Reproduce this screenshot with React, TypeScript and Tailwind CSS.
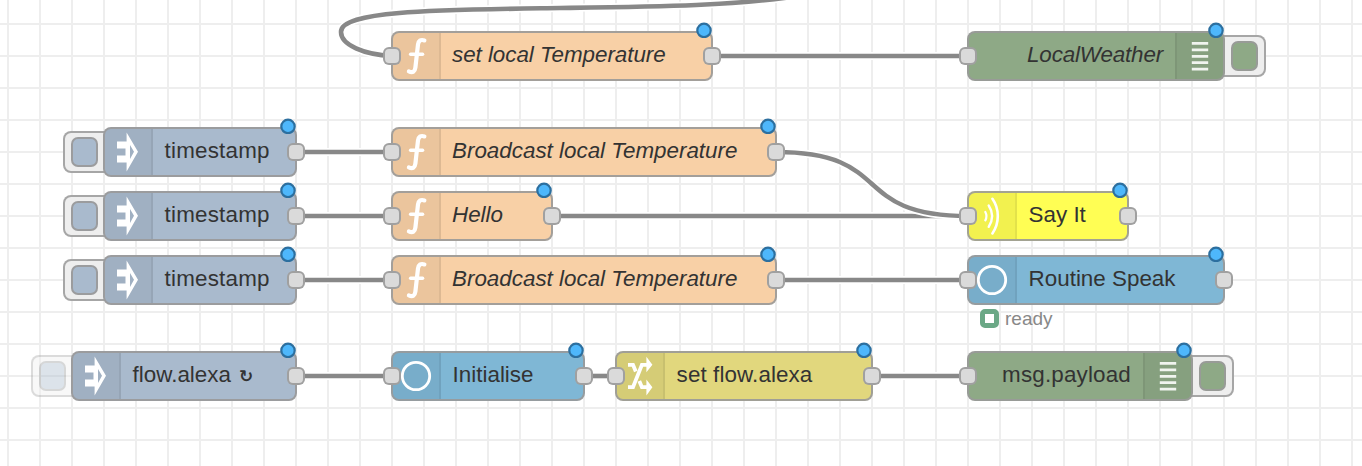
import type { ReactNode } from "react";

type IconName = "inject" | "function" | "debug" | "say" | "circle" | "change";

type FlowNode = {
  id: string;
  x: number;
  y: number;
  w: number;
  fill: string;
  icon: IconName;
  label: string;
  tracking?: string;
  repeats?: boolean;
  input?: boolean;
  output?: boolean;
  button?: "left" | "right" | "disabled";
  italic?: boolean;
};

const PEACH = "bg-[#f8d0a6]";
const STEEL = "bg-[#a9bacd]";
const BLUE = "bg-[#7fb7d5]";
const GREEN = "bg-[#8ea986]";

const nodes: FlowNode[] = [
  { id: "n1", x: 392, y: 32, w: 320, fill: PEACH, icon: "function", label: "set local Temperature", tracking: "tracking-[-0.04px]", input: true, output: true, italic: true },
  { id: "n2", x: 968, y: 32, w: 256, fill: GREEN, icon: "debug", label: "LocalWeather", tracking: "tracking-[-0.15px]", input: true, button: "right", italic: true },
  { id: "n3", x: 104, y: 128, w: 192, fill: STEEL, icon: "inject", label: "timestamp", tracking: "tracking-[0.2px]", output: true, button: "left" },
  { id: "n4", x: 392, y: 128, w: 384, fill: PEACH, icon: "function", label: "Broadcast local Temperature", input: true, output: true, italic: true },
  { id: "n5", x: 104, y: 192, w: 192, fill: STEEL, icon: "inject", label: "timestamp", tracking: "tracking-[0.2px]", output: true, button: "left" },
  { id: "n6", x: 392, y: 192, w: 160, fill: PEACH, icon: "function", label: "Hello", input: true, output: true, italic: true },
  { id: "n7", x: 968, y: 192, w: 160, fill: "bg-[#fffe54]", icon: "say", label: "Say It", input: true, output: true },
  { id: "n8", x: 104, y: 256, w: 192, fill: STEEL, icon: "inject", label: "timestamp", tracking: "tracking-[0.2px]", output: true, button: "left" },
  { id: "n9", x: 392, y: 256, w: 384, fill: PEACH, icon: "function", label: "Broadcast local Temperature", input: true, output: true, italic: true },
  { id: "n10", x: 968, y: 256, w: 256, fill: BLUE, icon: "circle", label: "Routine Speak", input: true, output: true },
  { id: "n11", x: 72, y: 352, w: 224, fill: STEEL, icon: "inject", label: "flow.alexa", repeats: true, output: true, button: "disabled" },
  { id: "n12", x: 392, y: 352, w: 192, fill: BLUE, icon: "circle", label: "Initialise", input: true, output: true },
  { id: "n13", x: 616, y: 352, w: 256, fill: "bg-[#e1d77d]", icon: "change", label: "set flow.alexa", tracking: "tracking-[0.1px]", input: true, output: true },
  { id: "n14", x: 968, y: 352, w: 224, fill: GREEN, icon: "debug", label: "msg.payload", tracking: "tracking-[0.18px]", input: true, button: "right" },
];

const wires = [
  "M804 -5 C740 6 650 6.8 560 8 C440 9.8 341 10 341 32 C341 45 364 54.5 392 56",
  "M712 56H968",
  "M296 152H392",
  "M296 216H392",
  "M296 280H392",
  "M552 216H968",
  "M776 152C896 152 848 216 968 216",
  "M776 280H968",
  "M296 376H392",
  "M584 376H616",
  "M872 376H968",
];

const glyphs: Record<IconName, ReactNode> = {
  inject: (
    <path
      fill="white"
      fillRule="evenodd"
      d="M13 13.6H22.6V4.5L34 23.8L22.6 43.5V34.4H13V27.4H21.5V20.6H13ZM26 17V31L30 23.8Z"
    />
  ),
  function: (
    <g fill="none" stroke="white" strokeWidth="4.2" strokeLinecap="round" strokeLinejoin="round">
      <path d="M32.4 8.4C28.6 7.2 26.6 8.8 26 12.5L23.4 35.5C22.9 39.6 20.6 41.2 16.9 39.4" />
      <path d="M18.6 22.2H30.6" strokeWidth="3.4" />
    </g>
  ),
  debug: (
    <path stroke="white" strokeOpacity="0.88" strokeWidth="2.8" d="M15.8 11.4H32.2M15.8 17.8H32.2M15.8 24.3H32.2M15.8 30.7H32.2M15.8 37.2H32.2" />
  ),
  say: (
    <g fill="none" stroke="white" strokeLinecap="round">
      <path strokeWidth="2.2" d="M17.3 20Q19.6 24 17.3 28.4" />
      <path strokeWidth="2.4" d="M20.7 13.5Q27.6 24 20.7 34.8" />
      <path strokeWidth="2.6" d="M24.4 6.8C31.6 17 31.6 31 24.4 41.5" />
    </g>
  ),
  circle: <circle cx="24" cy="24" r="13.7" fill="none" stroke="white" strokeWidth="2.8" />,
  change: (
    <>
      <g fill="none" stroke="white" strokeWidth="3.8">
        <path d="M12 35.2H17L25.9 12.8H32" />
        <path d="M12 12.8H17L19.8 19.4M23.3 29L25.9 35.2H32" />
      </g>
      <path fill="white" d="M30.4 4.8L36.4 12.8L30.4 20.2ZM30.4 27.4L36.4 35.2L30.4 43.4Z" />
    </>
  ),
};

function Port({ side }: { side: "left" | "right" }) {
  const place = side === "left" ? "-left-[9px]" : "-right-[9px]";
  return <span className={`absolute top-[15px] h-[18px] w-[18px] rounded-[6px] border-2 border-[#999999]/90 bg-[#dadada] ${place}`} />;
}

function TriggerButton({ kind, fill }: { kind: "left" | "right" | "disabled"; fill: string }) {
  const place = kind === "right" ? "-right-[42px] justify-end" : "-left-[41px]";
  const tone = kind === "disabled" ? "opacity-40" : "";
  return (
    <span className={`absolute top-[3px] flex h-[42px] w-[52px] items-center rounded-[8px] border-2 border-[#999999]/85 bg-[#eeeeee] px-[6px] ${place} ${tone}`}>
      <span className={`h-[30px] w-[27px] shrink-0 rounded-[7px] border-2 border-[#999999]/90 ${fill}`} />
    </span>
  );
}

function NodeView({ node }: { node: FlowNode }) {
  const iconRight = node.icon === "debug";
  const padding = iconRight ? "pr-[12px]" : node.italic ? "pl-[11px]" : "pl-[11.6px]";
  return (
    <div className="absolute h-12" style={{ left: node.x, top: node.y, width: node.w }}>
      {node.button && <TriggerButton kind={node.button} fill={node.fill} />}
      <div
        className={`relative -m-px flex h-[50px] overflow-hidden rounded-[8px] border-2 border-[#999999]/90 ${node.fill} ${iconRight ? "flex-row-reverse" : ""}`}
      >
        <div className={`h-full w-[48px] shrink-0 border-black/6 bg-black/5 ${iconRight ? "border-l-2" : "border-r-2"}`} />
        <span
          className={`-mt-px whitespace-nowrap text-[22.4px] leading-[46px] text-[#333333] ${node.tracking ?? ""} ${node.italic ? "italic" : ""} ${padding}`}
        >
          {node.label}
          {node.repeats && <span className="pl-[8px] font-['DejaVu_Sans',sans-serif] text-[17px] font-bold">↻</span>}
        </span>
      </div>
      <svg className={`absolute top-0 h-12 w-12 ${iconRight ? "right-0" : "left-0"}`} viewBox="0 0 48 48">
        {glyphs[node.icon]}
      </svg>
      {node.input && <Port side="left" />}
      {node.output && <Port side="right" />}
      <svg className="absolute -top-[10px] right-0 h-4 w-4" viewBox="0 0 16 16">
        <circle cx="8" cy="8.4" r="6.7" fill="#4eb7fb" stroke="#2c6f9f" strokeWidth="2.2" />
      </svg>
    </div>
  );
}

export default function App() {
  return (
    <main className="relative h-[466px] w-[1362px] overflow-hidden bg-white font-['Liberation_Sans',Arial,sans-serif]">
      <svg className="absolute inset-0" width="1362" height="466">
        <defs>
          <pattern id="grid" x="7" y="23" width="32" height="32" patternUnits="userSpaceOnUse">
            <path fill="#eeeeee" d="M0 0H32V2H2V32H0Z" />
          </pattern>
        </defs>
        <rect width="1362" height="466" fill="url(#grid)" />
        {wires.map((d) => (
          <g key={d} fill="none">
            <path d={d} stroke="white" strokeWidth="8" />
            <path d={d} stroke="#888888" strokeWidth="4.6" />
          </g>
        ))}
      </svg>
      {nodes.map((node) => (
        <NodeView key={node.id} node={node} />
      ))}
      <div className="absolute left-[980px] top-[308px] flex items-center gap-[6px]">
        <span className="h-[19px] w-[19px] rounded-[5px] border-[5px] border-[#6ba886] bg-white" />
        <span className="text-[19px] leading-[21px] text-[#888888]">ready</span>
      </div>
    </main>
  );
}
